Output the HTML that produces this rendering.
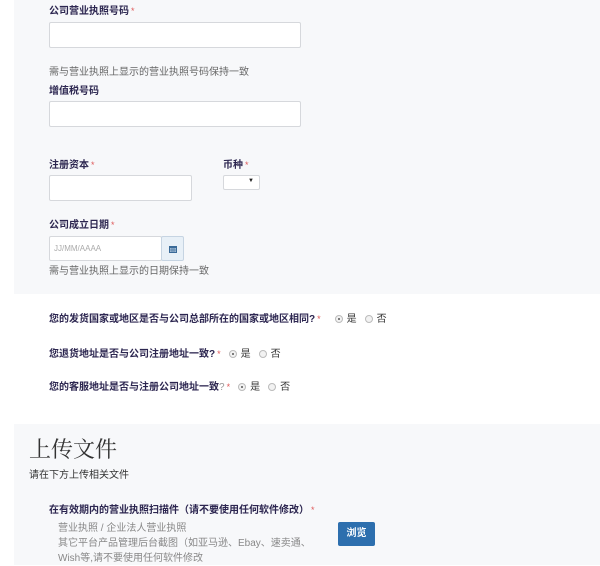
<!DOCTYPE html>
<html><head><meta charset="utf-8"><style>
*{margin:0;padding:0;box-sizing:border-box}
body{width:600px;height:565px;background:#fff;position:relative;overflow:hidden;font-family:"Liberation Sans","Noto Sans CJK SC",sans-serif}
.p{position:absolute;left:14px;right:0;background:#f7f8fa}
.a{position:absolute;white-space:nowrap}
.lb{font-size:10px;font-weight:bold;color:#2c2650}
.st{color:#e05a5a;font-weight:normal;font-size:9px;margin-left:2px}
.in{position:absolute;background:#fff;border:1px solid #d6d8dc;border-radius:2px}
.h{font-size:10px;color:#666}
.q{font-size:10px;font-weight:bold;color:#2c2650}
.r{display:inline-block;width:8px;height:8px;border:1px solid #bbb;border-radius:50%;background:#f2f2f2;vertical-align:-1px;margin:0 4px 0 8px;position:relative}
.r.on::after{content:"";position:absolute;left:2px;top:2px;width:2px;height:2px;border-radius:50%;background:#555}
.o{font-weight:normal;color:#333;font-size:10px}
</style></head><body>
<div class="p" style="top:0;height:294px"></div>
<div class="p" style="top:424px;height:141px"></div>

<div class="a lb" style="left:49px;top:2px">公司营业执照号码<span class="st">*</span></div>
<div class="in" style="left:49px;top:22px;width:252px;height:26px"></div>
<div class="a h" style="left:49px;top:63px">需与营业执照上显示的营业执照号码保持一致</div>
<div class="a lb" style="left:49px;top:82px">增值税号码</div>
<div class="in" style="left:49px;top:101px;width:252px;height:26px"></div>

<div class="a lb" style="left:49px;top:156px">注册资本<span class="st">*</span></div>
<div class="a lb" style="left:223px;top:156px">币种<span class="st">*</span></div>
<div class="in" style="left:49px;top:175px;width:143px;height:26px"></div>
<div class="in" style="left:223px;top:175px;width:37px;height:15px"><span style="position:absolute;right:5px;top:2px;font-size:6px;color:#222">▼</span></div>

<div class="a lb" style="left:49px;top:216px">公司成立日期<span class="st">*</span></div>
<div class="in" style="left:49px;top:236px;width:113px;height:25px"><span style="position:absolute;left:4px;top:7px;font-size:8px;color:#aaa">JJ/MM/AAAA</span></div>
<div class="in" style="left:161px;top:236px;width:23px;height:25px;background:#e8f0f7;border-color:#c6d4e2">
<svg width="8" height="8" style="position:absolute;left:7px;top:8px"><rect x="0" y="1" width="8" height="7" fill="#3a6a98"/><rect x="1" y="3" width="6" height="4" fill="#9db8d2"/><path d="M1 5h6M3 3v4M5 3v4" stroke="#3a6a98" stroke-width=".6"/></svg></div>
<div class="a h" style="left:49px;top:262px">需与营业执照上显示的日期保持一致</div>

<div class="a q" style="left:49px;top:310px">您的发货国家或地区是否与公司总部所在的国家或地区相同?<span class="st">*</span><span class="r on" style="margin-left:14px"></span><span class="o">是</span><span class="r"></span><span class="o">否</span></div>
<div class="a q" style="left:49px;top:345px">您退货地址是否与公司注册地址一致?<span class="st">*</span><span class="r on"></span><span class="o">是</span><span class="r"></span><span class="o">否</span></div>
<div class="a q" style="left:49px;top:378px">您的客服地址是否与注册公司地址一致<span style="font-weight:normal;color:#999">?</span><span class="st">*</span><span class="r on"></span><span class="o">是</span><span class="r"></span><span class="o">否</span></div>

<div class="a" style="left:29px;top:433px;font-family:'Noto Serif CJK SC','Liberation Serif',serif;font-size:22px;color:#333">上传文件</div>
<div class="a" style="left:29px;top:466px;font-size:10px;color:#333">请在下方上传相关文件</div>
<div class="a lb" style="left:49px;top:501px">在有效期内的营业执照扫描件（请不要使用任何软件修改）<span class="st">*</span></div>
<div class="a" style="left:58px;top:521px;font-size:10px;color:#888;line-height:15px;white-space:normal;width:260px">营业执照 / 企业法人营业执照<br>其它平台产品管理后台截图（如亚马逊、Ebay、速卖通、<br>Wish等,请不要使用任何软件修改</div>
<div class="a" style="left:338px;top:522px;width:37px;height:24px;background:#2d6fae;border-radius:2px;color:#fff;font-size:10px;font-weight:bold;text-align:center;line-height:24px">浏览</div>
</body></html>
